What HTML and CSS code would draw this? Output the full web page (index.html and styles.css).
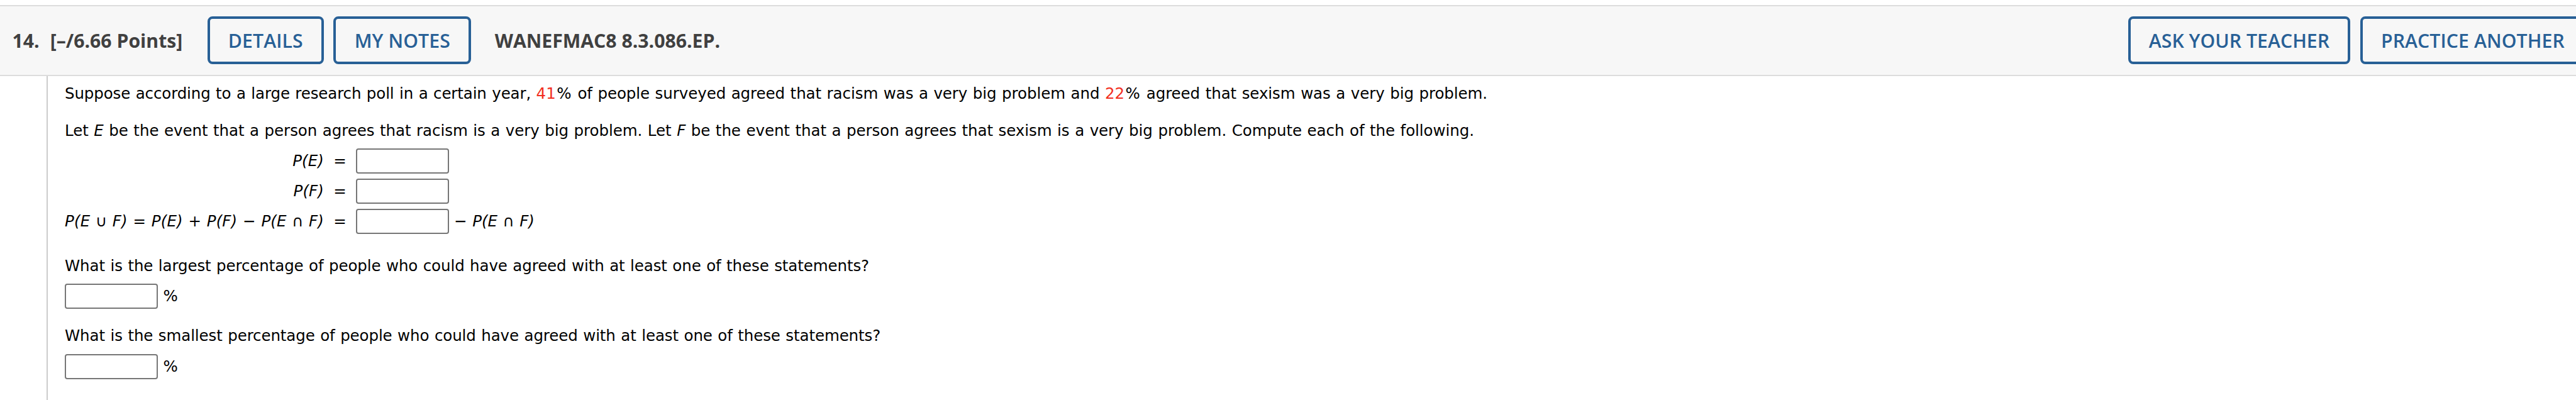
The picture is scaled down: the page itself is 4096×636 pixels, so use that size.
FILE: index.html
```html
<!DOCTYPE html>
<html>
<head>
    <meta charset="utf-8">
    <title>Question 14</title>
    <link rel="stylesheet" href="styles.css">
</head>
<body>
    <div class="question-header">
        <span class="number">14.</span>
        <span class="points">[–/6.66 Points]</span>
        <button class="btn details">DETAILS</button>
        <button class="btn notes">MY NOTES</button>
        <span class="source">WANEFMAC8 8.3.086.EP.</span>
        <div class="right-buttons">
            <button class="btn ask">ASK YOUR TEACHER</button>
            <button class="btn practice">PRACTICE ANOTHER</button>
        </div>
    </div>

    <div class="question-body">
        <p class="line intro"><span class="lead">Suppose according to a large research poll in a certain year, </span><span class="red">41</span><span class="percent">%</span> of people surveyed agreed that racism was a very big problem and <span class="red">22</span><span class="percent">%</span> agreed that sexism was a very big problem.</p>
        <p class="line events">Let <i>E</i> be the event that a person agrees that racism is a very big problem. Let <i>F</i> be the event that a person agrees that sexism is a very big problem. Compute each of the following.</p>

        <div class="equations">
            <span class="left">P(E)</span><span class="eq">=</span>
            <div><input type="text"></div>
            <span class="left">P(F)</span><span class="eq">=</span>
            <div><input type="text"></div>
            <span class="left">P(E <span class="set">∪</span> F) = P(E) + P(F) − P(E <span class="set">∩</span> F)</span><span class="eq">=</span>
            <div><input type="text"><span class="after">− P(E <span class="set">∩</span> F)</span></div>
        </div>

        <p class="line largest">What is the largest percentage of people who could have agreed with at least one of these statements?</p>
        <div class="answer"><input type="text"><span>%</span></div>

        <p class="line smallest">What is the smallest percentage of people who could have agreed with at least one of these statements?</p>
        <div class="answer"><input type="text"><span>%</span></div>
    </div>
</body>
</html>
```
FILE: styles.css
```css
* {
    box-sizing: border-box;
}

body {
    margin: 0;
    padding-top: 8px;
    height: 636px;
    overflow: hidden;
    display: flex;
    flex-direction: column;
    background-color: #fff;
    font-family: Verdana, "DejaVu Sans", sans-serif;
    font-size: 24.5px;
    color: #000;
}

.question-header {
    display: flex;
    align-items: center;
    flex: none;
    height: 113px;
    padding: 0 0 1px 19.5px;
    border-top: 2px solid #ddd;
    border-bottom: 2px solid #ddd;
    background-color: #f7f7f7;
    font-family: "Open Sans", sans-serif;
    font-size: 30.2px;
    font-weight: 700;
    color: #404040;
    white-space: nowrap;
}

.points {
    margin-left: 17px;
}

.btn {
    flex: none;
    height: 76px;
    padding: 0 29.3px;
    border: 4px solid #286096;
    border-radius: 8px;
    background-color: #f7f7f7;
    font-family: inherit;
    font-size: 30.2px;
    font-weight: 600;
    letter-spacing: 0.1px;
    color: #286096;
}

.details {
    margin-left: 39.3px;
}

.notes {
    margin-left: 15.3px;
}

.source {
    margin-left: 37.6px;
}

.right-buttons {
    display: flex;
    gap: 15.3px;
    width: 712.5px;
    margin-left: auto;
}

.ask {
    letter-spacing: 0.04px;
}

.question-body {
    flex: 1;
    margin-left: 74px;
    padding: 10px 0 0 27px;
    border-left: 2px solid #ccc;
}

.line {
    margin: 0;
    line-height: 36px;
    letter-spacing: -0.1px;
    word-spacing: 0.83px;
    white-space: nowrap;
}

.intro {
    letter-spacing: -0.07px;
}

.lead {
    letter-spacing: -0.12px;
}

.events {
    margin-top: 23px;
    letter-spacing: -0.058px;
}

.red {
    color: #f22d20;
}

.percent {
    padding: 0 1.5px;
}

.equations {
    display: grid;
    grid-template-columns: 412px 51px auto;
    grid-auto-rows: 40px;
    row-gap: 8.2px;
    margin-top: 10px;
    line-height: 40px;
    white-space: nowrap;
}

.left,
.after {
    font-style: italic;
    word-spacing: 0.83px;
}

.left {
    letter-spacing: 0.12px;
    text-align: right;
}

.set {
    font-style: normal;
}

.eq {
    padding-left: 15.3px;
}

input {
    width: 148px;
    height: 40px;
    padding: 0;
    border: 2px solid #767676;
    border-radius: 4px;
    background-color: #fff;
    vertical-align: top;
}

.after {
    margin-left: 8px;
}

.largest {
    margin-top: 33px;
}

.answer {
    display: flex;
    gap: 8.5px;
    line-height: 40px;
    margin-top: 10px;
}

.smallest {
    margin-top: 25px;
}

.smallest + .answer {
    margin-top: 11px;
}
```
